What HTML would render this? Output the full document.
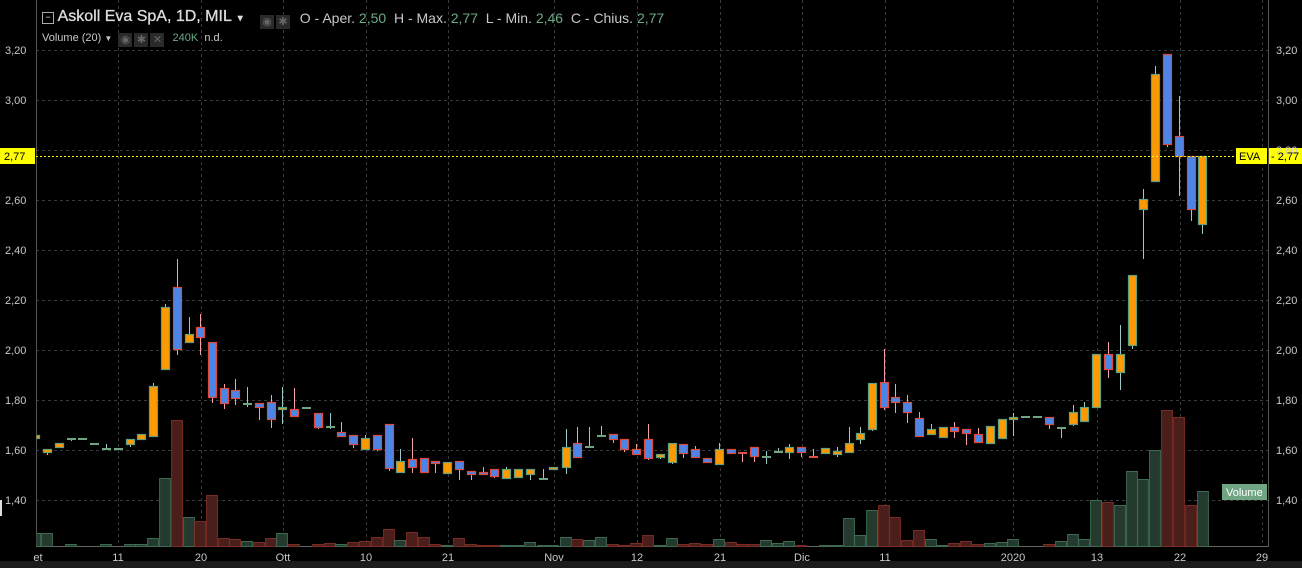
<!DOCTYPE html>
<html><head><meta charset="utf-8"><style>
html,body{margin:0;padding:0;background:#000;width:1302px;height:568px;overflow:hidden;font-family:"Liberation Sans",sans-serif}
.t{position:absolute;white-space:nowrap;color:#c8c8c8}
.g{color:#6bab84}
.ic{display:inline-block;width:14px;height:14px;background:#2a2a2a;vertical-align:-2px;margin-right:2px;color:#666;font-size:11px;text-align:center;line-height:14px}
</style></head><body>
<svg id="s" width="1302" height="568" style="position:absolute;left:0;top:0">
<defs><clipPath id="cp"><rect x="36.5" y="0" width="1231.5" height="547"/></clipPath></defs>
<rect x="0" y="561" width="1302" height="7" fill="#1c1c1c"/>
<g id="grid" stroke="#3a3a3a" stroke-dasharray="3,3" stroke-width="1"></g>
<line x1="36.5" y1="0" x2="36.5" y2="547" stroke="#555"/>
<line x1="1268.5" y1="0" x2="1268.5" y2="547" stroke="#555"/>
<line x1="36" y1="546.5" x2="1268" y2="546.5" stroke="#666"/>
<g clip-path="url(#cp)"><g id="vol"></g><g id="cdl"></g></g>
<line x1="36" y1="156.5" x2="1268" y2="156.5" stroke="#ffff00" stroke-dasharray="2,2"/>
<rect x="0" y="148" width="35" height="16" fill="#ffff00"/>
<rect x="1236" y="148" width="31" height="16" fill="#ffff00"/>
<rect x="1269" y="148" width="33" height="16" fill="#ffff00"/>
<rect x="1222" y="484" width="45" height="16" fill="#6fa583"/>
<rect x="0" y="500" width="2" height="16" fill="#ddd"/>
<g font-family="Liberation Sans,sans-serif" font-size="11" fill="#c8c8c8">
<text x="5" y="54">3,20</text><text x="5" y="104">3,00</text><text x="5" y="204">2,60</text><text x="5" y="254">2,40</text><text x="5" y="304">2,20</text><text x="5" y="354">2,00</text><text x="5" y="404">1,80</text><text x="5" y="454">1,60</text><text x="5" y="504">1,40</text>
<text x="1276" y="54">3,20</text><text x="1276" y="104">3,00</text><text x="1276" y="204">2,60</text><text x="1276" y="254">2,40</text><text x="1276" y="304">2,20</text><text x="1276" y="354">2,00</text><text x="1276" y="404">1,80</text><text x="1276" y="454">1,60</text><text x="1276" y="504">1,40</text>
<text x="1276" y="154">2,80</text>
<text x="4" y="160" fill="#000">2,77</text>
<text x="1239" y="160" fill="#000">EVA</text>
<text x="1271" y="160" fill="#000">- 2,77</text>
<text x="1226" y="496" fill="#fff">Volume</text>
<g text-anchor="middle">
<text x="38" y="561">et</text><text x="118" y="561">11</text><text x="201" y="561">20</text><text x="283" y="561">Ott</text><text x="366" y="561">10</text><text x="448" y="561">21</text><text x="554" y="561">Nov</text><text x="637" y="561">12</text><text x="720" y="561">21</text><text x="802" y="561">Dic</text><text x="885" y="561">11</text><text x="1013" y="561">2020</text><text x="1097" y="561">13</text><text x="1180" y="561">22</text><text x="1262" y="561">29</text>
</g></g>
</svg>
<div class="t" style="left:42px;top:8px;font-size:16px;color:#ddd;-webkit-text-stroke:0.3px #ddd"><span style="display:inline-block;width:10px;height:10px;border:1px solid #aaa;vertical-align:1px;font-size:9px;line-height:9px;text-align:center;-webkit-text-stroke:0">−</span> Askoll Eva SpA, 1D, MIL <span style="font-size:9px">▼</span></div>
<div class="t" style="left:260px;top:10px;font-size:14px"><span class="ic">◉</span><span class="ic">✱</span>&nbsp; O - Aper. <span class="g">2,50</span>&nbsp; H - Max. <span class="g">2,77</span>&nbsp; L - Min. <span class="g">2,46</span>&nbsp; C - Chius. <span class="g">2,77</span></div>
<div class="t" style="left:42px;top:32px;font-size:11px">Volume (20) <span style="font-size:8px">▼</span> &nbsp;<span class="ic">◉</span><span class="ic">✱</span><span class="ic">✕</span> &nbsp;<span class="g">240K</span>&nbsp; n.d.</div>
<script>
var NS="http://www.w3.org/2000/svg";
function el(p,t,a){var e=document.createElementNS(NS,t);for(var k in a)e.setAttribute(k,a[k]);p.appendChild(e);return e;}
var G=document.getElementById('grid');
[50,100,150,200,250,300,350,400,450,500].forEach(function(y){el(G,'line',{x1:36,x2:1268,y1:y+.5,y2:y+.5});});
[118,201,283,366,448,554,637,720,802,885,1013,1097,1180,1262].forEach(function(x){el(G,'line',{x1:x+.5,x2:x+.5,y1:0,y2:546});});
var C=[[35,435,438,435,438,1],[47,449,452,449,454,1],[59,443,447,443,447,1],[71,439,439,438,440,2],[82,439,439,439,439,2],[94,444,444,444,444,2],[106,449,449,444,449,2],[118,449,449,449,449,2],[130,439,444,439,446,1],[141,434,439,434,439,1],[153,386,436,383,436,1],[165,307,369,304,369,1],[177,287,349,259,354,0],[189,334,342,317,342,1],[200,327,337,314,354,0],[212,342,397,342,402,0],[224,388,403,384,408,0],[235,390,398,379,404,0],[247,404,404,387,406,2],[259,403,407,403,419,0],[271,402,419,395,427,0],[282,407,409,387,423,1],[294,409,416,388,416,0],[306,408,408,408,408,2],[318,413,427,413,428,0],[330,427,427,413,428,2],[341,432,436,422,436,0],[353,435,444,435,447,0],[365,438,449,435,449,1],[377,435,449,435,450,0],[389,424,468,424,470,0],[400,461,472,449,472,1],[412,459,467,438,472,0],[424,458,472,458,472,0],[435,461,463,461,472,0],[447,462,473,462,473,1],[459,461,469,461,479,0],[471,471,474,471,479,0],[483,472,474,467,474,0],[494,469,476,469,477,0],[506,469,478,467,478,1],[518,469,477,469,477,1],[530,469,474,469,479,1],[543,479,479,469,479,2],[553,467,469,467,469,1],[566,447,467,429,473,1],[577,443,457,427,457,0],[589,447,447,427,447,2],[601,436,436,426,436,2],[613,434,439,434,442,0],[624,439,449,439,451,0],[636,449,454,444,454,0],[648,439,458,424,459,0],[660,454,457,454,458,1],[672,443,462,443,463,1],[683,444,453,444,457,0],[695,449,457,446,457,0],[707,458,462,458,462,0],[719,449,464,443,464,1],[731,449,453,449,453,0],[742,453,453,453,461,3],[754,447,456,447,461,0],[766,457,457,451,463,2],[778,452,452,448,452,2],[789,447,452,444,458,1],[801,447,452,447,456,0],[813,457,457,449,457,3],[825,448,453,448,453,1],[837,451,454,447,456,1],[849,443,452,427,452,1],[860,433,439,427,443,1],[872,383,429,383,430,1],[884,382,407,349,409,0],[895,397,402,384,412,0],[907,402,412,395,422,0],[919,418,436,412,436,0],[931,429,434,424,434,1],[943,427,437,427,437,1],[954,427,431,422,437,0],[966,429,433,429,444,0],[978,434,442,428,442,0],[990,426,443,426,443,1],[1002,419,438,419,438,1],[1013,417,419,413,435,1],[1025,417,417,417,417,2],[1037,417,417,417,417,2],[1049,417,424,417,428,0],[1061,428,428,428,437,2],[1073,412,424,405,425,1],[1084,407,421,402,421,1],[1096,354,407,354,407,1],[1108,354,369,342,377,0],[1120,354,372,325,389,1],[1132,275,345,275,348,1],[1143,199,209,189,258,1],[1155,74,181,66,181,1],[1167,54,144,54,146,0],[1179,136,156,96,195,0],[1191,156,209,156,220,0],[1202,156,224,156,233,1]];
var V=[[35,533,1],[47,533,1],[71,544,1],[106,544,1],[130,544,1],[141,544,1],[153,538,1],[165,478,1],[177,420,0],[189,517,1],[200,521,0],[212,495,0],[224,538,0],[235,539,0],[247,541,1],[259,542,0],[271,538,0],[282,533,1],[294,544,0],[318,544,0],[330,543,0],[341,544,1],[353,542,0],[365,541,0],[377,537,0],[389,529,0],[400,540,1],[412,532,0],[424,537,0],[435,544,0],[447,545,1],[459,538,0],[471,544,0],[483,545,0],[494,545,0],[506,545,1],[518,545,1],[530,542,1],[543,545,1],[553,545,1],[566,537,1],[577,539,0],[589,540,1],[601,537,1],[613,544,0],[624,545,0],[636,543,0],[648,535,0],[660,545,1],[672,538,1],[683,544,0],[695,543,0],[707,544,0],[719,539,1],[731,542,0],[742,544,0],[754,544,0],[766,540,1],[778,543,1],[789,541,1],[801,545,0],[825,545,1],[837,545,1],[849,518,1],[860,535,1],[872,510,1],[884,505,0],[895,517,0],[907,540,0],[919,530,0],[931,539,1],[943,545,1],[954,543,0],[966,541,0],[978,544,0],[990,543,1],[1002,542,1],[1013,539,1],[1049,544,0],[1061,541,1],[1073,534,1],[1084,539,1],[1096,500,1],[1108,502,0],[1120,505,1],[1132,471,1],[1143,479,1],[1155,450,1],[1167,410,0],[1179,417,0],[1191,505,0],[1203,491,1]];
var VG=document.getElementById('vol');
V.forEach(function(v){var w=11.8;el(VG,'rect',{x:v[0]-w/2+.5,y:v[1]+.5,width:w-1,height:546-v[1],fill:v[2]?'#243a2f':'#4a1f1b',stroke:v[2]?'#3e6a52':'#7a2c24','stroke-width':1});});
var CG=document.getElementById('cdl');
C.forEach(function(c){var x=c[0],t=c[5],up=(t==1||t==2);
el(CG,'line',{x1:x+.5,x2:x+.5,y1:c[3],y2:c[4]+1,stroke:up?'#9cc8c8':'#f4a0a8','stroke-width':1});
if(t>=2){el(CG,'rect',{x:x-4,y:c[1]-1,width:9,height:2,fill:t==2?'#6fa583':'#e05040'});}
else{var h=Math.max(c[2]-c[1],2);el(CG,'rect',{x:x-3.5,y:c[1]+.5,width:8,height:h,fill:up?'#ff9900':'#4a86e8',stroke:up?'#5fa080':'#e04a3a','stroke-width':1.2});}
});
</script>
</body></html>
